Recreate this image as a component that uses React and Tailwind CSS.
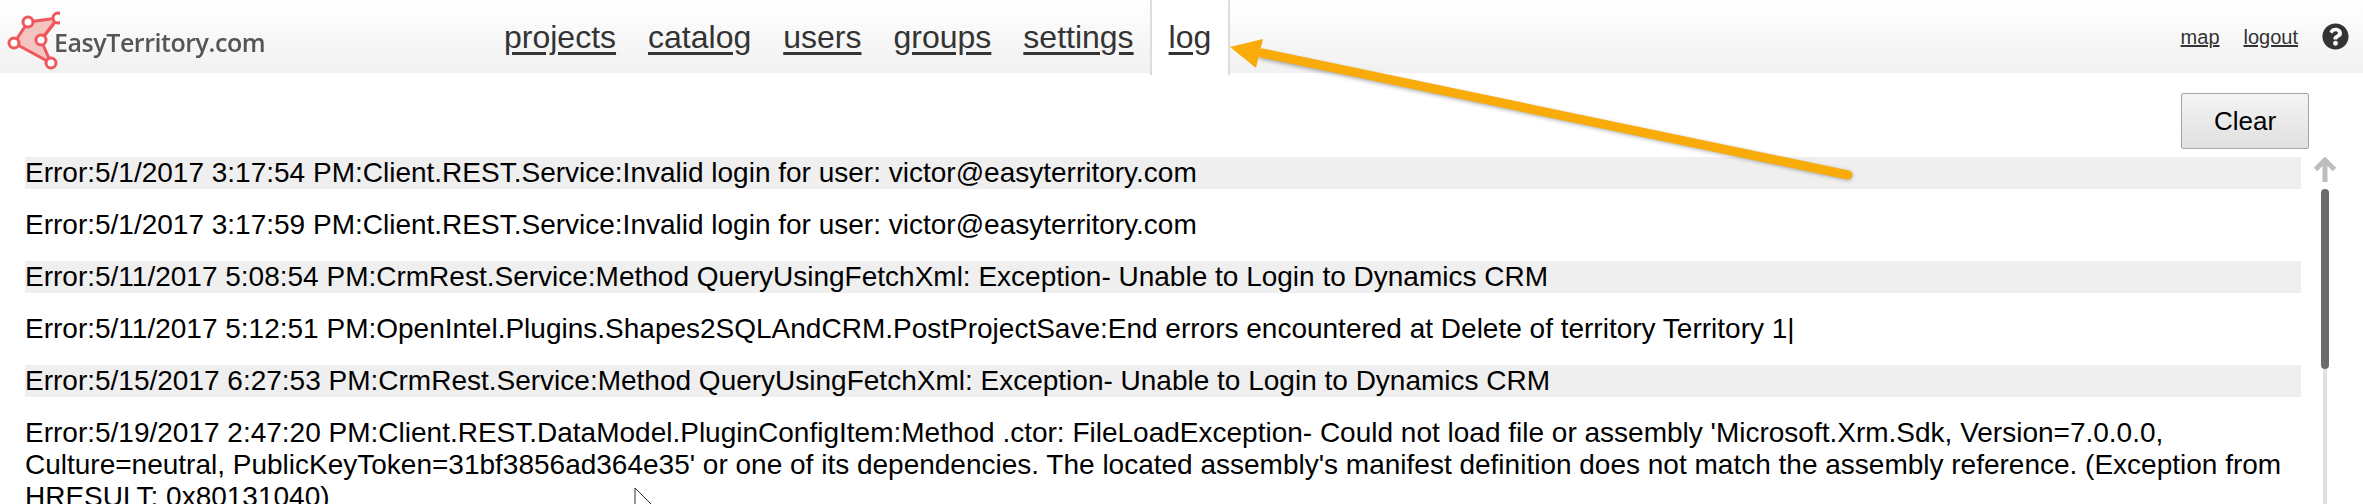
import React from 'react';
import { FaQuestionCircle } from 'react-icons/fa';

const navItems = ['projects', 'catalog', 'users', 'groups', 'settings'];

const logRows = [
    'Error:5/1/2017 3:17:54 PM:Client.REST.Service:Invalid login for user: victor@easyterritory.com',
    'Error:5/1/2017 3:17:59 PM:Client.REST.Service:Invalid login for user: victor@easyterritory.com',
    'Error:5/11/2017 5:08:54 PM:CrmRest.Service:Method QueryUsingFetchXml: Exception- Unable to Login to Dynamics CRM',
    'Error:5/11/2017 5:12:51 PM:OpenIntel.Plugins.Shapes2SQLAndCRM.PostProjectSave:End errors encountered at Delete of territory Territory 1|',
    'Error:5/15/2017 6:27:53 PM:CrmRest.Service:Method QueryUsingFetchXml: Exception- Unable to Login to Dynamics CRM',
    "Error:5/19/2017 2:47:20 PM:Client.REST.DataModel.PluginConfigItem:Method .ctor: FileLoadException- Could not load file or assembly 'Microsoft.Xrm.Sdk, Version=7.0.0.0, Culture=neutral, PublicKeyToken=31bf3856ad364e35' or one of its dependencies. The located assembly's manifest definition does not match the assembly reference. (Exception from HRESULT: 0x80131040)",
];

const LogoMark = () => (
    <svg width="60" height="60" viewBox="0 0 60 60" className="shrink-0 blur-[0.4px]">
        <polygon points="28,11 58,7 41,29 51,52 14,32" fill="#f4c4c0" stroke="#f0565a" strokeWidth="3" strokeLinejoin="round" />
        <line x1="58" y1="7" x2="41" y2="29" stroke="#f0565a" strokeWidth="3" />
        {[[28, 11], [58, 7], [41, 29], [51, 52], [14, 32]].map(([cx, cy]) => (
            <circle key={cx} cx={cx} cy={cy} r="5" fill="#fff" stroke="#f0565a" strokeWidth="3" />
        ))}
    </svg>
);

const Header = () => (
    <div className="flex h-[73px] bg-gradient-to-b from-white to-[#f1f1f1] text-[#333]">
        <div className="flex w-[504px] shrink-0 items-start pt-[11px]">
            <div className="w-[54px] shrink-0 overflow-visible">
                <LogoMark />
            </div>
            <span className="mt-[14px] font-['Open_Sans',sans-serif] text-[25px] leading-[34px] font-semibold tracking-[-0.45px] text-[#555555] blur-[0.5px]">
                EasyTerritory.com
            </span>
        </div>
        <nav className="flex items-start gap-[32px] pt-[15px] text-[32px] leading-[44px]">
            {navItems.map((item) => (
                <a key={item} className="underline underline-offset-[4px]">{item}</a>
            ))}
        </nav>
        <div className="ml-[16px] h-[75px] border-x-2 border-[#dddddd] bg-white px-[17px] pt-[15px] text-[32px] leading-[44px]">
            <a className="underline underline-offset-[4px]">log</a>
        </div>
        <div className="ml-auto flex items-center gap-[24px] pr-[14px] text-[20px]">
            <a className="underline">map</a>
            <a className="underline">logout</a>
            <FaQuestionCircle className="text-[27px] text-[#333]" />
        </div>
    </div>
);

const Scrollbar = () => (
    <div className="flex w-[48px] shrink-0 flex-col items-center">
        <svg width="24" height="26" viewBox="0 0 24 26" className="shrink-0">
            <path d="M12 25V3M2.500 12.500L12 3l9.500 9.500" fill="none" stroke="#bdbdbd" strokeWidth="5" />
        </svg>
        <div className="mt-[6px] flex w-[8px] flex-1 flex-col items-center">
            <div className="h-[180px] w-[8px] rounded-full bg-[#6b6b6b]" />
            <div className="w-[4px] flex-1 bg-[#e0e0e0]" />
        </div>
    </div>
);

const App = () => {
    return (
        <div className="relative h-[504px] overflow-hidden bg-white font-['Liberation_Sans',Arial,sans-serif]">
            <Header />
            <div className="flex justify-end pt-[20px] pr-[54px]">
                <button className="h-[56px] w-[128px] rounded-[2px] border border-[#a5a5a5] bg-gradient-to-b from-[#f4f4f4] to-[#e0e0e0] text-[26px] text-black">
                    Clear
                </button>
            </div>
            <div className="mt-[8px] flex h-[347px] pl-[25px]">
                <div className="flex min-w-0 w-[2276px] flex-col gap-[20px] text-[28px] leading-[32px] text-black">
                    {logRows.map((row, i) => (
                        <div key={i} className={i % 2 === 0 ? 'bg-[#efefef]' : ''}>{row}</div>
                    ))}
                </div>
                <Scrollbar />
            </div>

            {/* annotation arrow drawn over the screenshot */}
            <svg width="640" height="150" viewBox="0 0 640 150" className="absolute top-[34px] left-[1226px] overflow-visible">
                <g transform="translate(2 3)" opacity="0.45" className="blur-[2px]">
                    <path d="M34 18L620 139" stroke="#333" strokeWidth="8" fill="none" strokeLinecap="round" />
                </g>
                <path d="M36 19L622 141" stroke="#f9ab09" strokeWidth="9" fill="none" strokeLinecap="round" />
                <polygon points="4,13 37,5 30,34" fill="#f9ab09" />
            </svg>

            {/* mouse pointer */}
            <svg width="18" height="18" viewBox="0 0 18 18" className="absolute top-[487px] left-[634px]">
                <path d="M1 1V17M1 1L17 17" fill="none" stroke="#333" strokeWidth="1" />
            </svg>
        </div>
    );
};

export default App;
